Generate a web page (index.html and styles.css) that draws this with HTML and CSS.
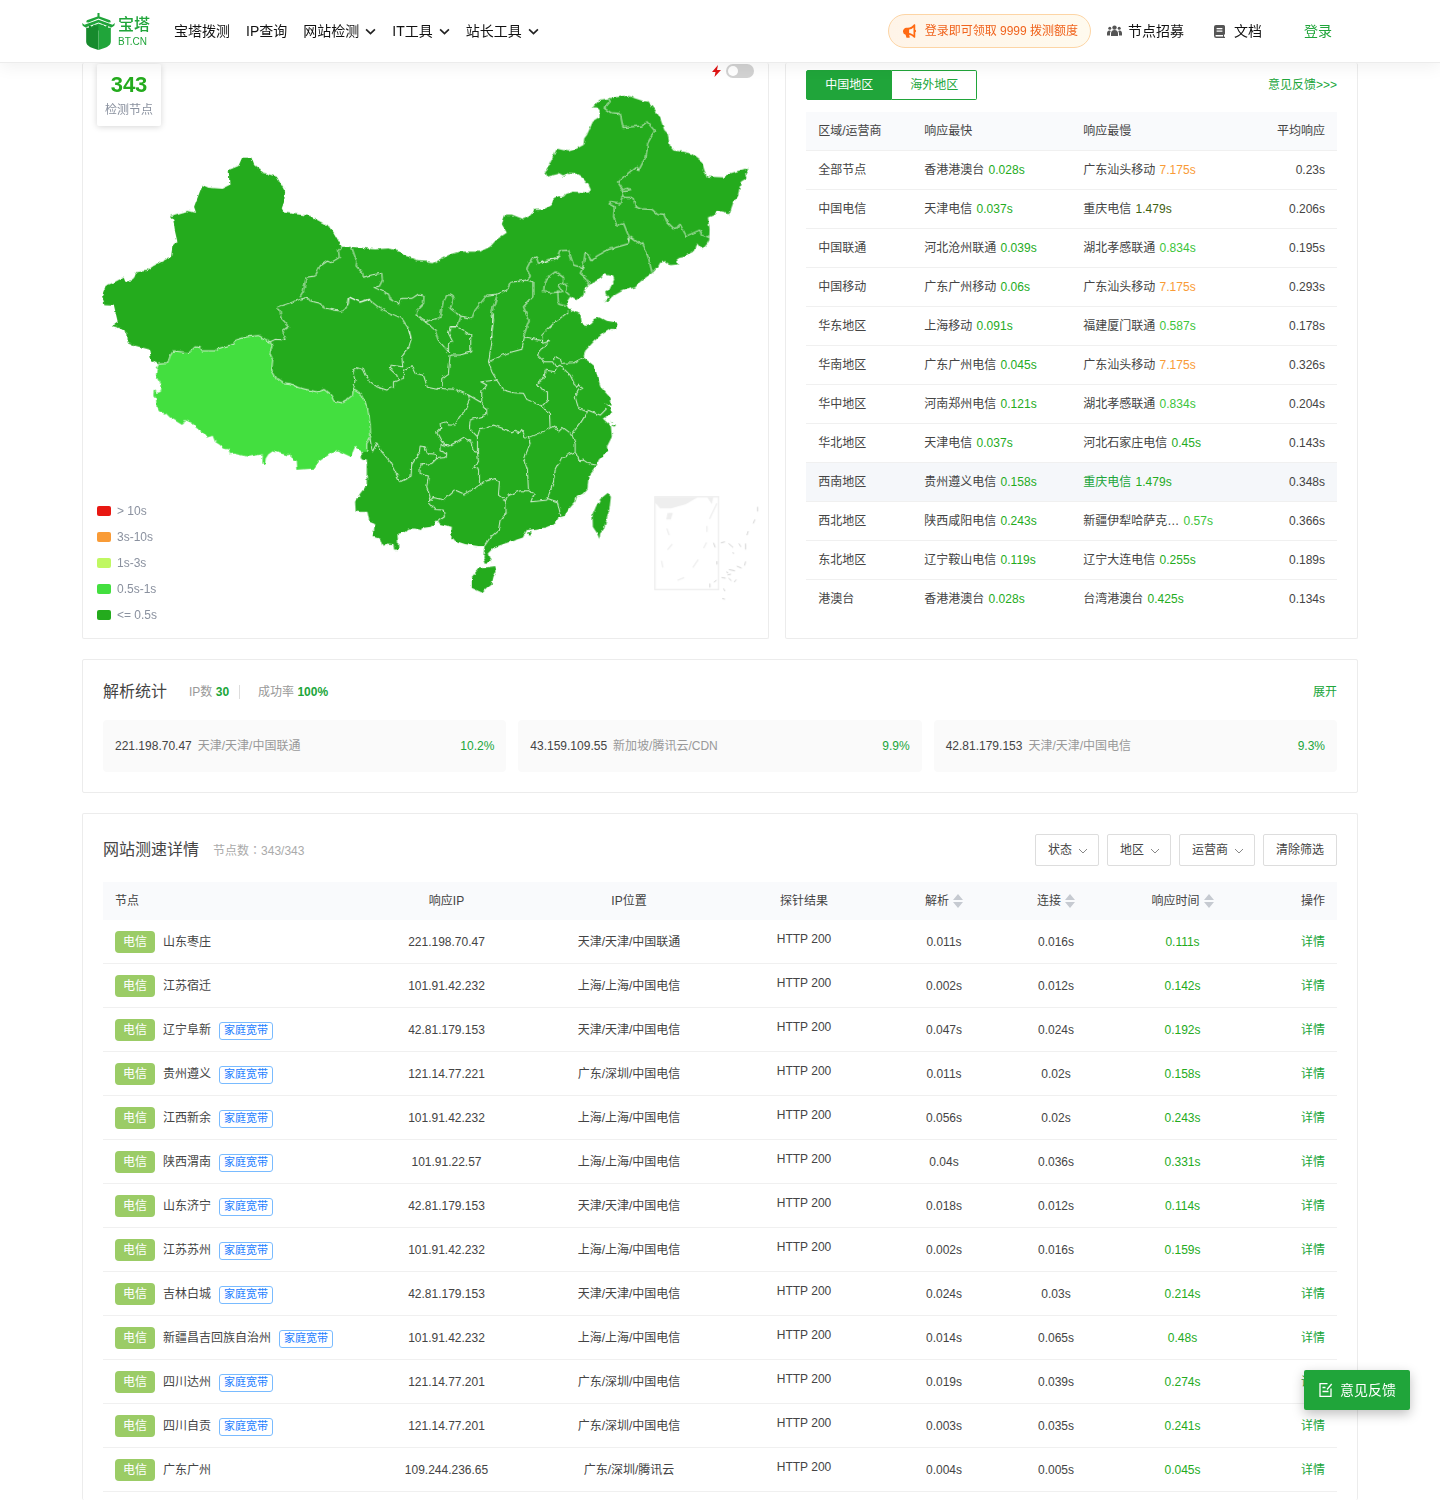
FILE: index.html
```html
<!DOCTYPE html>
<html lang="zh-CN">
<head>
<meta charset="utf-8">
<meta name="viewport" content="width=device-width, initial-scale=1">
<title>宝塔拨测</title>
<link rel="stylesheet" href="styles.css">
</head>
<body>
<header class="topbar">
  <div class="topbar-inner">
    <a class="logo" href="#" aria-label="宝塔 BT.CN">
      <svg class="logo-mark" viewBox="0 0 96 108" aria-hidden="true">
        <path fill="#20a53a" d="M45 0h6v10l31 11 2 6-7 1-29-12-29 12-7-1 2-6 31-11z"/>
        <path fill="#20a53a" d="M48 20l41 14 7-5-2 8-8 5-38-14-38 14-8-5-2-8 7 5z"/>
        <path fill="#20a53a" d="M48 31l29 11v9H19v-9z"/>
        <path fill="#178a2d" d="M12 42l8 2v-7h6v6l7-3v-6h6v5l9-4v73C30 103 12 97 12 84z"/>
        <path fill="#20a53a" d="M84 42l-8 2v-7h-6v6l-7-3v-6h-6v5l-9-4v73c18-5 36-11 36-24z"/>
      </svg>
      <span class="logo-text"><b class="logo-name">宝塔</b><span class="logo-domain">BT.CN</span></span>
    </a>
    <nav class="nav">
      <a href="#">宝塔拨测</a>
      <a href="#">IP查询</a>
      <a href="#">网站检测<svg class="chev" viewBox="0 0 10 10"><path d="M1 3l4 4 4-4"/></svg></a>
      <a href="#">IT工具<svg class="chev" viewBox="0 0 10 10"><path d="M1 3l4 4 4-4"/></svg></a>
      <a href="#">站长工具<svg class="chev" viewBox="0 0 10 10"><path d="M1 3l4 4 4-4"/></svg></a>
    </nav>
    <div class="actions">
      <a class="promo" href="#">
        <svg viewBox="0 0 16 16" aria-hidden="true"><path fill="#ff6a13" fill-rule="evenodd" d="M14 1v5.600a1.500 1.500 0 0 1 0 2.800V15a.8.8 0 0 1-1.300.6C11 14 9.300 12.700 7 12.300l.6 2.400a.8.8 0 0 1-.8 1.100H4.600a.8.8 0 0 1-.8-.6L3 12.200A3.600 3.600 0 0 1 0 8.500 3.900 3.900 0 0 1 4 4.400h1.500C8.500 4.300 11 2.500 12.700.4A.8.8 0 0 1 14 1zM12 4c-1.500 1.300-3 2.100-5 2.400v3.900c2 .3 3.500 1 5 2.200z"/></svg>
        登录即可领取 9999 拨测额度
      </a>
      <a class="action recruit" href="#">
        <svg width="15" height="12" viewBox="0 0 15 12" aria-hidden="true"><g fill="#555"><circle cx="7.500" cy="2.600" r="2.200"/><circle cx="2.800" cy="3.300" r="1.500"/><circle cx="12.200" cy="3.300" r="1.500"/><path d="M4 11V8.500a3.500 3.500 0 0 1 7 0V11zM0 10.500V8a2.500 2.500 0 0 1 3.800-2.100A5 5 0 0 0 3 8.500v2zM15 10.500V8a2.500 2.500 0 0 0-3.800-2.100A5 5 0 0 1 12 8.500v2z"/></g></svg>
        节点招募
      </a>
      <a class="action docs" href="#">
        <svg width="11" height="13" viewBox="0 0 11 13" aria-hidden="true"><path fill="#555" fill-rule="evenodd" d="M2 0h7.500A1.500 1.500 0 0 1 11 1.500V9l-1 1v1.500l1 .5v1H2.200A2.200 2.200 0 0 1 0 10.800V2a2 2 0 0 1 2-2zm.6 3v1.200h5.800V3zm0 2.600v1.200h5.800V5.600zM2.200 10a.8.8 0 0 0 0 1.600H9V10z"/></svg>
        文档
      </a>
      <a class="login" href="#">登录</a>
    </div>
  </div>
</header>

<main class="page">
  <div class="overview">
    <section class="card map-card">
      <svg class="map" viewBox="249 189 2055 1725" role="img" aria-label="中国各省响应时间地图">
        <defs>
          <filter id="coast" filterUnits="userSpaceOnUse" x="249" y="189" width="2055" height="1725" color-interpolation-filters="sRGB">
            <feTurbulence type="fractalNoise" baseFrequency="0.06" numOctaves="2" seed="4" result="noise"/>
            <feDisplacementMap in="SourceGraphic" in2="noise" scale="11" xChannelSelector="R" yChannelSelector="G"/>
          </filter>
        </defs>
        <g filter="url(#coast)">
        <g class="land">
          <polygon transform="translate(270 420)" points="36,465 47,437 70,428 98,413 103,425 128,420 138,396 170,392 190,378 243,350 247,320 262,305 254,270 250,240 240,228 292,213 318,218 312,200 337,135 355,143 395,146 418,135 416,90 445,78 456,53 484,53 492,75 520,98 560,110 585,155 582,185 575,205 583,218 660,228 722,262 755,320 785,321 840,327 840,920 560,800 540,680 205,672 183,660 178,628 130,615 113,608 112,580 92,565 65,557 83,545 72,497 43,495"/>
          <polygon transform="translate(1020 240)" points="-30,502 35,502 105,508 145,505 178,512 188,524 230,540 262,542 265,547 280,549 325,525 360,515 420,515 450,500 470,478 500,458 485,432 495,404 515,404 550,417 568,408 585,390 615,388 635,375 640,355 652,349 660,349 660,780 -30,780"/>
          <polygon transform="translate(1620 240)" points="-20,390 0,390 35,378 42,355 70,350 78,342 100,335 145,338 152,330 145,315 125,292 105,280 85,278 70,290 55,282 30,288 22,290 14,275 22,265 50,206 85,214 105,208 130,195 132,175 140,165 158,125 178,112 178,90 170,82 157,82 178,60 205,55 260,47 305,62 325,65 345,90 360,115 372,150 382,160 390,200 400,212 430,215 455,222 485,245 492,270 500,290 552,292 560,283 625,263 615,280 618,295 602,305 592,350 580,365 567,402 530,393 520,405 503,412 508,445 507,480 500,492 487,507 478,500 470,490 465,510 445,520 435,530 410,535 413,553 390,555 375,543 360,548 352,562 338,577 320,590 300,605 285,622 250,630 215,650 205,662 190,667 205,652 195,640 207,630 222,598 218,588 190,582 175,600 148,614 132,630 130,645 107,660 90,650 80,665 85,690 120,700 -20,730"/>
          <polygon transform="translate(1020 900)" points="-50,-30 675,-30 680,20 700,38 718,42 722,65 738,78 750,72 765,56 780,52 800,62 835,68 830,87 812,86 782,105 765,120 735,152 730,172 762,197 782,262 812,295 814,318 792,305 810,322 815,338 788,355 812,378 815,410 800,440 803,450 775,480 770,495 760,510 745,530 742,565 728,580 710,590 705,605 690,622 672,648 655,652 645,670 615,682 560,690 548,712 500,728 460,742 443,760 452,785 437,788 430,770 433,738 415,738 375,732 345,722 333,708 335,680 300,672 292,660 272,680 250,683 245,690 225,685 205,685 195,695 172,702 175,748 162,748 160,732 140,730 127,737 120,715 98,710 105,672 88,665 82,635 47,635 45,605 60,580 80,555 80,478 65,475 65,455 40,400 -50,300"/>
          <polygon transform="translate(1020 900)" points="803,578 812,590 808,625 800,655 792,685 780,700 778,717 770,698 758,680 757,645 767,620 780,597"/>
          <polygon transform="translate(1020 900)" points="465,798 469,813 460,829 455,850 440,862 425,877 395,863 395,830 415,805 437,802"/>
          <path transform="translate(1020 900)" d="M818 375l8-2v5l-7 1zM812 362l6 2-3 4zM562 696l10 1-4 10-7-3z"/>
        </g>
        <polygon class="tibet" transform="translate(270 960)" points="205,132 233,130 240,108 250,92 270,94 298,97 315,80 330,82 337,92 375,92 385,85 415,76 432,72 438,60 470,50 505,46 540,65 546,75 540,100 548,118 545,150 560,175 578,187 600,190 625,202 680,215 702,208 722,225 732,243 752,248 775,235 787,225 790,208 812,222 832,260 840,310 842,350 830,370 830,395 812,395 795,380 782,410 740,390 722,400 685,425 672,445 622,449 620,425 608,420 603,403 592,405 548,393 535,402 527,415 525,432 517,430 518,402 475,410 430,400 420,402 415,388 402,385 388,373 375,365 368,347 350,352 340,338 305,308 285,300 277,315 240,292 228,280 208,274 200,262 198,235 190,225 192,208 202,218 212,215 215,195 205,178 198,165 200,145"/>
        <g class="borders">
          <polyline transform="translate(270 960)" points="205,132 233,130 240,108 250,92 270,94 298,97 315,80 330,82 337,92 375,92 385,85 415,76 432,72 438,60 470,50 505,46 540,65 546,75 540,100 548,118 545,150 560,175 578,187 600,190 625,202 680,215 702,208 722,225 732,243 752,248 775,235 787,225 790,208 812,222 832,260 840,310 842,350 830,370 830,395"/>
          <path transform="translate(270 420)" d="M755 320L745 330 748 352 722 368 712 363 690 378 675 408 648 412 640 455 630 472M560 502L630 478 652 472 660 482 690 490 700 503 752 514 765 508 775 490 777 470 810 487 840 477M560 502L570 510 572 532 595 558 578 572 588 600 555 598 540 605"/>
          <path transform="translate(1020 240)" d="M35 502L50 545 48 558 68 580 70 592 90 585 125 580 127 600 118 618 102 622 145 642 150 658 175 672 185 655 215 655 235 642 252 645 250 670 230 690 228 705 255 725 300 712 308 670 320 645 335 645 340 658 330 685 362 708 395 715 405 690 440 645 472 642 500 630 512 607 560 600 570 590 560 565 575 535 588 530 595 550 640 538 660 525M20 675L25 650 60 665 85 657 120 685 185 715 205 745 213 775M255 725L285 750 294 780M362 708L352 740 330 740M472 642L455 695 460 720 452 780M560 600L578 605 578 650 550 680 567 720 550 770"/>
          <path transform="translate(1620 240)" d="M0 550L25 538 50 535 60 512 85 510 100 555 128 562 135 518 145 525 155 542 170 528 205 508 268 490 265 468 250 430 230 438 220 410 222 380 207 372 212 365 240 372 245 352 278 352 285 380 300 386 335 388 348 400 370 402 380 425 400 445 412 442 418 430 438 468 478 450 485 465 508 472M250 350L248 335 268 332 262 324 248 330 232 305 290 258 295 272 318 228 322 190 343 152 320 125 305 138 248 142 240 100 212 98 192 85 210 65 205 55M268 490L272 472 300 492 308 488 325 535 335 577M128 562L120 580 135 592 148 614M45 575L70 592 70 608 55 618 65 635 35 638 10 635 12 615 20 595zM70 608L82 620 77 635 88 645M52 630L55 672 80 678"/>
          <path transform="translate(1020 900)" d="M205 85L213 118 205 145 185 170 188 200 150 195 148 205 170 225 175 240 190 235 190 210 215 200 225 220 250 225 262 262 290 268 305 262M40 270L45 240 38 215 55 203 70 208 85 240 110 260 140 270 160 262 160 245 178 240M290 265L345 268 385 285 388 300 370 340 358 350 345 375 325 375 318 365 300 370 302 385 290 398 305 425 325 438 300 432 300 452 320 462 318 472 290 475 285 462 262 460 255 440 240 438 238 455 215 490 213 528 180 545 150 485 125 455 110 428 97 455 90 415M290 475L275 490 240 495 240 520 265 528 260 560 270 590 265 605 285 628 310 630 313 650 295 662M265 605L280 592 312 600 345 570 372 582 418 555 430 545 465 535 478 545 475 585 495 600M418 552L418 510 400 500 415 485 412 455 400 450 392 425 370 412 350 425 325 438M385 285L420 305 440 325 440 345 390 360 388 385 412 410 412 455M470 240L422 245 440 255 425 275 425 305M412 410L418 390 440 383 460 375 515 395 525 390 535 402 545 388 555 410 565 412M470 240L490 270 520 278 550 280 560 298 605 318 628 340 630 385 565 412M565 412L570 430 560 455 552 480 562 510 565 572M495 600L505 585 540 572 565 572 582 580 572 605 620 600M497 600L498 640 480 660 475 690 450 712 433 738M620 600L640 545 645 510 665 472 705 455M705 455L718 482 730 480 745 490 768 495M622 595L652 605 662 648M630 385L644 378 655 395 668 382 695 402 705 430 705 455M695 402L720 370 742 335 715 325 705 290 715 270 728 265 715 255 708 262 690 225 660 195 650 200M742 330L780 345 800 325M650 200L645 215 615 210 612 235 592 250 605 270 622 275 622 300 605 318M650 200L640 185 612 185 592 165 610 140 628 122 608 130 605 105 625 85 640 70 685 35M640 180L645 170 660 175 665 190 700 188 730 172M455 100L455 130 445 185 455 215 470 240M445 185L500 160 545 148 553 110 608 122M294 120L325 155 325 130 338 125 325 100 330 80 350 80 392 105 392 155 360 165 330 165 325 220 305 235 305 262M452 115L460 40"/>
        </g>
        </g>
        <g class="inset" transform="translate(1860 1440)">
          <rect x="104" y="50" width="191" height="278"/>
          <path class="inset-fill" d="M104 52h128l-35 20-45 13h-32l-16-18zM261 52h18l-4 20zM142 98h16l-6 20h-14z"/>
          <path d="M140 145l7 20M156 192l-14 17M124 242l4 20M172 300l20-8M218 262l16-24M250 204l9-17M260 155v-18M268 116l22-46"/>
          <path class="islands" d="M412 80v14M404 118l-5 12M384 153l-4 12M376 190v18M376 244l-3 12M280 188l5 14M290 243v10M269 310v12M281 306l8-6M325 294l9 8M342 306l6-8M306 355l8 2M302 188l12-3M325 190l14 12M356 190l6 10M326 268l18 4M322 284l10-2M310 325l4 8M350 258l14 6M304 292l12 2M318 275l6 3M338 216l2 5"/>
        </g>
      </svg>
      <div class="node-count"><strong>343</strong><span>检测节点</span></div>
      <label class="speed-switch">
        <svg viewBox="0 0 9 12" aria-hidden="true"><path fill="#e01515" d="M6 0L0 7h3.500L2.500 12 9 5H5z"/></svg>
        <input type="checkbox" aria-label="快速模式">
      </label>
      <ul class="legend">
        <li class="lv5">&gt; 10s</li>
        <li class="lv4">3s-10s</li>
        <li class="lv3">1s-3s</li>
        <li class="lv2">0.5s-1s</li>
        <li class="lv1">&lt;= 0.5s</li>
      </ul>
    </section>

    <section class="card region-card">
      <div class="region-head">
        <div class="tabs"><button class="tab active" type="button">中国地区</button><button class="tab" type="button">海外地区</button></div>
        <a href="#">意见反馈&gt;&gt;&gt;</a>
      </div>
      <table class="region-table">
        <colgroup><col class="r-area"><col class="r-fast"><col class="r-slow"><col></colgroup>
        <thead><tr><th>区域/运营商</th><th>响应最快</th><th>响应最慢</th><th>平均响应</th></tr></thead>
        <tbody>
          <tr><td>全部节点</td><td>香港港澳台 <i>0.028s</i></td><td>广东汕头移动 <i class="slow">7.175s</i></td><td>0.23s</td></tr>
          <tr><td>中国电信</td><td>天津电信 <i>0.037s</i></td><td>重庆电信 <i class="mid">1.479s</i></td><td>0.206s</td></tr>
          <tr><td>中国联通</td><td>河北沧州联通 <i>0.039s</i></td><td>湖北孝感联通 <i class="ok">0.834s</i></td><td>0.195s</td></tr>
          <tr><td>中国移动</td><td>广东广州移动 <i>0.06s</i></td><td>广东汕头移动 <i class="slow">7.175s</i></td><td>0.293s</td></tr>
          <tr><td>华东地区</td><td>上海移动 <i>0.091s</i></td><td>福建厦门联通 <i class="ok">0.587s</i></td><td>0.178s</td></tr>
          <tr><td>华南地区</td><td>广东广州电信 <i>0.045s</i></td><td>广东汕头移动 <i class="slow">7.175s</i></td><td>0.326s</td></tr>
          <tr><td>华中地区</td><td>河南郑州电信 <i>0.121s</i></td><td>湖北孝感联通 <i class="ok">0.834s</i></td><td>0.204s</td></tr>
          <tr><td>华北地区</td><td>天津电信 <i>0.037s</i></td><td>河北石家庄电信 <i>0.45s</i></td><td>0.143s</td></tr>
          <tr class="hovered"><td>西南地区</td><td>贵州遵义电信 <i>0.158s</i></td><td class="linked">重庆电信 <i>1.479s</i></td><td>0.348s</td></tr>
          <tr><td>西北地区</td><td>陕西咸阳电信 <i>0.243s</i></td><td>新疆伊犁哈萨克… <i class="ok">0.57s</i></td><td>0.366s</td></tr>
          <tr><td>东北地区</td><td>辽宁鞍山电信 <i>0.119s</i></td><td>辽宁大连电信 <i>0.255s</i></td><td>0.189s</td></tr>
          <tr><td>港澳台</td><td>香港港澳台 <i>0.028s</i></td><td>台湾港澳台 <i>0.425s</i></td><td>0.134s</td></tr>
        </tbody>
      </table>
    </section>
  </div>

  <section class="card resolve-card">
    <div class="card-head">
      <h2>解析统计</h2>
      <span class="metric">IP数 <b>30</b></span>
      <span class="metric">成功率 <b>100%</b></span>
      <a class="expand" href="#">展开</a>
    </div>
    <div class="ip-list">
      <div class="ip-item"><span>221.198.70.47</span><span class="place">天津/天津/中国联通</span><span class="share">10.2%</span></div>
      <div class="ip-item"><span>43.159.109.55</span><span class="place">新加坡/腾讯云/CDN</span><span class="share">9.9%</span></div>
      <div class="ip-item"><span>42.81.179.153</span><span class="place">天津/天津/中国电信</span><span class="share">9.3%</span></div>
    </div>
  </section>

  <section class="card detail-card">
    <div class="detail-head">
      <h2>网站测速详情</h2>
      <span class="total">节点数<span class="colon" lang="zh-TW">：</span>343/343</span>
      <div class="filters">
        <label class="filter"><select aria-label="状态"><option>状态</option></select><svg viewBox="0 0 10 6"><path d="M1 1l4 4 4-4"/></svg></label>
        <label class="filter"><select aria-label="地区"><option>地区</option></select><svg viewBox="0 0 10 6"><path d="M1 1l4 4 4-4"/></svg></label>
        <label class="filter"><select aria-label="运营商"><option>运营商</option></select><svg viewBox="0 0 10 6"><path d="M1 1l4 4 4-4"/></svg></label>
        <button class="clear" type="button">清除筛选</button>
      </div>
    </div>
    <table class="detail-table">
      <colgroup><col><col class="d-ip"><col class="d-place"><col class="d-probe"><col class="d-time"><col class="d-time"><col class="d-total"><col class="d-op"></colgroup>
      <thead><tr><th>节点</th><th>响应IP</th><th>IP位置</th><th>探针结果</th>
        <th>解析<svg class="sort" viewBox="0 0 10 14"><path d="M5 0l5 6H0zM5 14L0 8h10z"/></svg></th>
        <th>连接<svg class="sort" viewBox="0 0 10 14"><path d="M5 0l5 6H0zM5 14L0 8h10z"/></svg></th>
        <th>响应时间<svg class="sort" viewBox="0 0 10 14"><path d="M5 0l5 6H0zM5 14L0 8h10z"/></svg></th><th>操作</th></tr></thead>
      <tbody>
        <tr><td><span class="isp">电信</span>山东枣庄</td><td>221.198.70.47</td><td>天津/天津/中国联通</td><td class="probe">HTTP 200</td><td>0.011s</td><td>0.016s</td><td class="good">0.111s</td><td><a href="#">详情</a></td></tr>
        <tr><td><span class="isp">电信</span>江苏宿迁</td><td>101.91.42.232</td><td>上海/上海/中国电信</td><td class="probe">HTTP 200</td><td>0.002s</td><td>0.012s</td><td class="good">0.142s</td><td><a href="#">详情</a></td></tr>
        <tr><td><span class="isp">电信</span>辽宁阜新<span class="home">家庭宽带</span></td><td>42.81.179.153</td><td>天津/天津/中国电信</td><td class="probe">HTTP 200</td><td>0.047s</td><td>0.024s</td><td class="good">0.192s</td><td><a href="#">详情</a></td></tr>
        <tr><td><span class="isp">电信</span>贵州遵义<span class="home">家庭宽带</span></td><td>121.14.77.221</td><td>广东/深圳/中国电信</td><td class="probe">HTTP 200</td><td>0.011s</td><td>0.02s</td><td class="good">0.158s</td><td><a href="#">详情</a></td></tr>
        <tr><td><span class="isp">电信</span>江西新余<span class="home">家庭宽带</span></td><td>101.91.42.232</td><td>上海/上海/中国电信</td><td class="probe">HTTP 200</td><td>0.056s</td><td>0.02s</td><td class="good">0.243s</td><td><a href="#">详情</a></td></tr>
        <tr><td><span class="isp">电信</span>陕西渭南<span class="home">家庭宽带</span></td><td>101.91.22.57</td><td>上海/上海/中国电信</td><td class="probe">HTTP 200</td><td>0.04s</td><td>0.036s</td><td class="good">0.331s</td><td><a href="#">详情</a></td></tr>
        <tr><td><span class="isp">电信</span>山东济宁<span class="home">家庭宽带</span></td><td>42.81.179.153</td><td>天津/天津/中国电信</td><td class="probe">HTTP 200</td><td>0.018s</td><td>0.012s</td><td class="good">0.114s</td><td><a href="#">详情</a></td></tr>
        <tr><td><span class="isp">电信</span>江苏苏州<span class="home">家庭宽带</span></td><td>101.91.42.232</td><td>上海/上海/中国电信</td><td class="probe">HTTP 200</td><td>0.002s</td><td>0.016s</td><td class="good">0.159s</td><td><a href="#">详情</a></td></tr>
        <tr><td><span class="isp">电信</span>吉林白城<span class="home">家庭宽带</span></td><td>42.81.179.153</td><td>天津/天津/中国电信</td><td class="probe">HTTP 200</td><td>0.024s</td><td>0.03s</td><td class="good">0.214s</td><td><a href="#">详情</a></td></tr>
        <tr><td><span class="isp">电信</span>新疆昌吉回族自治州<span class="home">家庭宽带</span></td><td>101.91.42.232</td><td>上海/上海/中国电信</td><td class="probe">HTTP 200</td><td>0.014s</td><td>0.065s</td><td class="good">0.48s</td><td><a href="#">详情</a></td></tr>
        <tr><td><span class="isp">电信</span>四川达州<span class="home">家庭宽带</span></td><td>121.14.77.201</td><td>广东/深圳/中国电信</td><td class="probe">HTTP 200</td><td>0.019s</td><td>0.039s</td><td class="good">0.274s</td><td><a href="#">详情</a></td></tr>
        <tr><td><span class="isp">电信</span>四川自贡<span class="home">家庭宽带</span></td><td>121.14.77.201</td><td>广东/深圳/中国电信</td><td class="probe">HTTP 200</td><td>0.003s</td><td>0.035s</td><td class="good">0.241s</td><td><a href="#">详情</a></td></tr>
        <tr><td><span class="isp">电信</span>广东广州</td><td>109.244.236.65</td><td>广东/深圳/腾讯云</td><td class="probe">HTTP 200</td><td>0.004s</td><td>0.005s</td><td class="good">0.045s</td><td><a href="#">详情</a></td></tr>
      </tbody>
    </table>
  </section>
</main>

<button class="feedback" type="button">
  <svg viewBox="0 0 14 16" aria-hidden="true"><path fill="none" stroke="#fff" stroke-width="1.300" d="M8.500 1.700H1v12.600h11V6.500M3.500 5.500h3M3.500 9.500h6M12.700 2L8 7.500"/></svg>
  意见反馈
</button>
</body>
</html>
```
FILE: styles.css
```css
* { box-sizing: border-box; }
body {
  margin: 0;
  background: #fff;
  color: #444;
  font: 12px/18px "Liberation Sans", "Noto Sans CJK SC", sans-serif;
}
a { color: #20a53a; text-decoration: none; }
h2 { margin: 0; font-size: 16px; line-height: 24px; font-weight: 400; color: #444; }
button, select, input { font: inherit; margin: 0; }
svg { flex: none; }

/* top bar */
.topbar {
  position: sticky;
  top: 0;
  z-index: 10;
  background: #fff;
  border-bottom: 1px solid #ececec;
  box-shadow: 0 4px 16px rgba(0, 0, 0, .06);
}
.topbar-inner {
  max-width: 1276px;
  height: 62px;
  margin: 0 auto;
  display: flex;
  align-items: center;
}
.logo { display: flex; align-items: center; gap: 3px; }
.logo-mark { width: 33px; height: 37px; }
.logo-text { display: flex; flex-direction: column; padding-top: 2px; }
.logo-name { font-size: 16px; line-height: 20px; font-weight: 500; }
.logo-domain { font-size: 10px; line-height: 14px; }
.nav { display: flex; gap: 16px; margin-left: 24px; font-size: 14px; line-height: 20px; }
.nav a { display: flex; align-items: center; gap: 6px; color: #111; }
.chev { width: 11px; height: 11px; fill: none; stroke: #222; stroke-width: 1.5; }
.actions {
  display: flex;
  align-items: center;
  margin-left: auto;
  padding-right: 26px;
  font-size: 14px;
}
.promo {
  display: flex;
  align-items: center;
  gap: 8px;
  height: 34px;
  padding: 0 12px 0 14px;
  border: 1px solid #fdd5a5;
  border-radius: 17px;
  background: linear-gradient(90deg, #fff4e8, #fffaee);
  color: #f0641e;
  font-size: 12px;
}
.promo svg { width: 14px; height: 14px; }
.action { display: flex; align-items: center; gap: 6px; color: #111; }
.recruit { margin-left: 16px; }
.docs { margin-left: 30px; gap: 9px; }
.login { margin-left: 42px; }

/* cards */
.page { max-width: 1276px; margin: 0 auto; display: grid; gap: 20px; }
.card { border: 1px solid #ececec; border-radius: 2px; min-width: 0; }
.overview { display: grid; grid-template-columns: 6fr 5fr; gap: 16px; }

/* map */
.map-card { position: relative; border-top: 0; }
.map { display: block; width: 100%; height: auto; }
.land { fill: #24ab1d; }
.tibet { fill: #43df3f; }
.borders { fill: none; stroke: #fff; stroke-opacity: .8; stroke-width: 3; stroke-linejoin: round; }
.inset { fill: none; stroke: #eee; stroke-width: 4; }
.inset .inset-fill { fill: #eee; stroke: none; }
.inset .islands { stroke: #bbb; stroke-width: 2; }
.node-count {
  position: absolute;
  top: 1px;
  left: 14px;
  display: grid;
  padding: 8px 8px 4px;
  border-radius: 2px;
  background: #fff;
  box-shadow: 0 1px 6px rgba(0, 0, 0, .16);
  text-align: center;
  color: #8a919f;
}
.node-count strong { font-size: 22px; line-height: 26px; color: #24ab1d; }
.node-count span { line-height: 24px; }
.speed-switch {
  position: absolute;
  top: 1px;
  right: 14px;
  display: flex;
  align-items: center;
  gap: 5px;
}
.speed-switch svg { width: 9px; height: 12px; }
.speed-switch input {
  appearance: none;
  width: 28px;
  height: 14px;
  padding: 2px;
  border-radius: 7px;
  background: #d2d2d2;
}
.speed-switch input::before {
  content: "";
  display: block;
  width: 10px;
  height: 10px;
  border-radius: 50%;
  background: #fff;
}
.legend {
  position: absolute;
  left: 14px;
  bottom: 14px;
  display: grid;
  gap: 8px;
  margin: 0;
  padding: 0;
  list-style: none;
  color: #8a919f;
}
.legend li { display: flex; align-items: center; gap: 6px; }
.legend li::before { content: ""; width: 14px; height: 10px; border-radius: 2px; background: currentColor; }
.legend .lv5::before { background: #e81812; }
.legend .lv4::before { background: #f99b36; }
.legend .lv3::before { background: #c0f862; }
.legend .lv2::before { background: #43df3f; }
.legend .lv1::before { background: #24ab1d; }

/* regions */
.region-card { border-top: 0; padding: 7px 20px 0; }
.region-head { display: flex; align-items: center; justify-content: space-between; }
.tabs { display: flex; }
.tab {
  height: 30px;
  padding: 0 18px;
  border: 1px solid #20a53a;
  border-left: 0;
  border-radius: 0 2px 2px 0;
  background: #fff;
  color: #20a53a;
}
.tab.active { border-left: 1px solid #20a53a; border-radius: 2px 0 0 2px; background: #20a53a; color: #fff; }
table { width: 100%; border-collapse: separate; border-spacing: 0; table-layout: fixed; }
th, td { padding: 0 12px; text-align: left; font-weight: 400; white-space: nowrap; }
.region-table { margin-top: 12px; }
.region-table th, .region-table td { height: 39px; border-bottom: 1px solid #f0f0f0; }
.region-table th { background: #f9fafc; }
.region-table tr > :last-child { text-align: right; }
.region-table tbody tr:last-child td { border-bottom-color: transparent; }
.region-table i { margin-left: 1px; font-style: normal; color: #24ab1d; }
.region-table i.slow { color: #f99b36; }
.region-table i.ok { color: #3cc43a; }
.region-table i.mid { color: #3f6212; }
.region-table .hovered td { background: #f5f7fa; }
.region-table .linked { color: #20a53a; }
.r-area { width: 106px; }
.r-fast { width: 159px; }
.r-slow { width: 160px; }

/* resolve stats */
.resolve-card { padding: 20px; }
.card-head { display: flex; align-items: center; }
.metric { margin-left: 22px; color: #999; }
.metric b { color: #20a53a; }
.metric + .metric { margin-left: 10px; padding-left: 18px; border-left: 1px solid #ddd; line-height: 14px; }
.expand { margin-left: auto; }
.ip-list { display: grid; grid-template-columns: repeat(3, 1fr); gap: 12px; margin-top: 16px; }
.ip-item { display: flex; align-items: center; gap: 6px; height: 52px; padding: 0 12px; border-radius: 4px; background: #fafafa; }
.place { color: #999; }
.share { margin-left: auto; color: #20a53a; }

/* details */
.detail-card { padding: 20px 20px 8px; border-bottom: 0; }
.detail-head { display: flex; align-items: center; }
.total { margin-left: 14px; color: #aaa; }
.colon { font-family: "Noto Sans CJK TC", sans-serif; }
.filters { display: flex; gap: 8px; margin-left: auto; }
.filter { position: relative; display: flex; }
.filter select, .clear {
  appearance: none;
  height: 32px;
  padding: 0 12px;
  border: 1px solid #ddd;
  border-radius: 2px;
  background: #fff;
  color: #444;
}
.filter select { padding-right: 25px; }
.filter svg {
  position: absolute;
  right: 11px;
  top: 14px;
  width: 10px;
  height: 6px;
  fill: none;
  stroke: #888;
  pointer-events: none;
}
.detail-table { margin-top: 16px; }
.detail-table th { height: 38px; background: #f9fafc; text-align: center; }
.detail-table td { height: 44px; border-bottom: 1px solid #f0f0f0; text-align: center; }
.detail-table tr > :first-child { text-align: left; }
.detail-table tr > :last-child { text-align: right; }
.detail-table .probe { padding-bottom: 6px; }
.good { color: #24ab1d; }
.d-ip { width: 183px; }
.d-place { width: 182px; }
.d-probe { width: 168px; }
.d-time { width: 112px; }
.d-total { width: 141px; }
.d-op { width: 84px; }
.sort { width: 10px; height: 14px; margin-left: 4px; vertical-align: -3px; fill: #c6cad1; }
.isp, .home { display: inline-block; }
.isp { margin-right: 8px; padding: 0 8px; border-radius: 4px; background: #9bcc66; color: #fff; line-height: 22px; }
.home {
  margin-left: 8px;
  padding: 0 4px 2px;
  border: 1px solid #79bbff;
  border-radius: 3px;
  color: #1e80ff;
  font-size: 11px;
  line-height: 14px;
}

/* floating button */
.feedback {
  position: fixed;
  right: 30px;
  bottom: 90px;
  z-index: 20;
  display: flex;
  align-items: center;
  gap: 7px;
  height: 40px;
  padding: 0 14px 0 15px;
  border: 0;
  border-radius: 2px;
  background: #20a53a;
  color: #fff;
  font-size: 14px;
  box-shadow: 0 4px 12px rgba(0, 0, 0, .25);
}
.feedback svg { width: 14px; height: 16px; }
```
